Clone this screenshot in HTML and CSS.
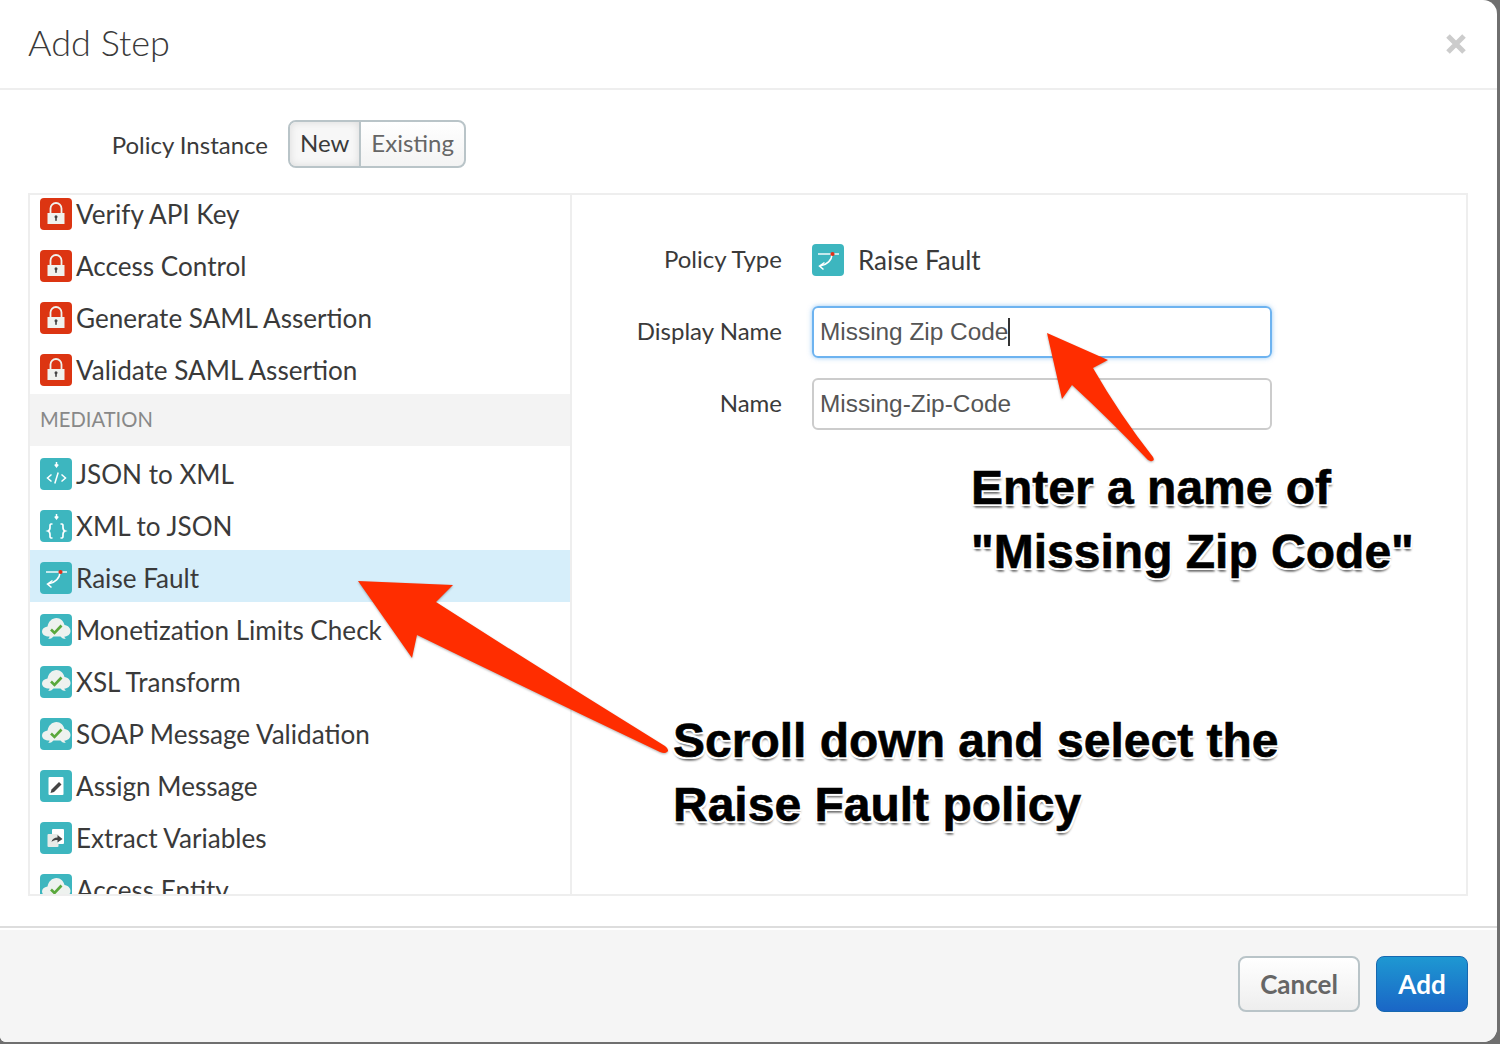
FILE: index.html
```html
<!DOCTYPE html>
<html lang="en">
<head>
  <meta charset="UTF-8" />
  <title>Add Step</title>
  <link rel="stylesheet" href="styles.css">
</head>
<body>
  <svg class="icon-defs" width="0" height="0">
    <defs>
      <symbol id="i-lock" viewBox="0 0 32 32">
        <rect width="32" height="32" rx="4" fill="#dc3512"/>
        <path d="M10.500 15v-4.500a5.500 5.500 0 0 1 11 0V15" fill="none" stroke="#f0f2ee" stroke-width="1.800"/>
        <rect x="7.500" y="15" width="17" height="11" fill="#f0f2ee"/>
        <circle cx="16" cy="18.700" r="1.500" fill="#444"/>
        <rect x="15.200" y="19" width="1.600" height="3.800" fill="#444"/>
      </symbol>
      <symbol id="i-json" viewBox="0 0 32 32">
        <rect width="32" height="32" rx="4" fill="#3db6bf"/>
        <path d="M16.500 4v4M14.800 6.500l1.700 2.200 1.700-2.200" fill="none" stroke="#fff" stroke-width="1.500"/>
        <path d="M11.500 16.500 7.500 20l4 3.500M21.500 16.500l4 3.500-4 3.500M18.200 14.500l-3.400 11" fill="none" stroke="#fff" stroke-width="1.500"/>
      </symbol>
      <symbol id="i-xml" viewBox="0 0 32 32">
        <rect width="32" height="32" rx="4" fill="#3db6bf"/>
        <path d="M16.500 4v4M14.800 6.500l1.700 2.200 1.700-2.200" fill="none" stroke="#fff" stroke-width="1.500"/>
        <path d="M12.500 14h-1.200c-1.500 0-1.300 1.500-1.300 3.500 0 2-.5 3-2 3.500 1.500.5 2 1.500 2 3.500s-.2 3.500 1.300 3.500h1.200M20.500 14h1.200c1.500 0 1.300 1.500 1.300 3.500 0 2 .5 3 2 3.500-1.500.5-2 1.500-2 3.500s.2 3.500-1.300 3.500h-1.200" fill="none" stroke="#fff" stroke-width="1.700"/>
      </symbol>
      <symbol id="i-fault" viewBox="0 0 32 32">
        <rect width="32" height="32" rx="4" fill="#3db6bf"/>
        <path d="M6 10h21" fill="none" stroke="#fff" stroke-width="1.400"/>
        <path d="M20 10c0 6-5 11-12 12M12.500 18.500 7.500 22l4 3.500" fill="none" stroke="#fff" stroke-width="1.500"/>
        <circle cx="20.500" cy="10" r="2.100" fill="#e0301a"/>
      </symbol>
      <symbol id="i-cloud" viewBox="0 0 32 32">
        <rect width="32" height="32" rx="4" fill="#3db6bf"/>
        <path d="M8 25c1-.8 1.500-1.500 1.500-2.500C5 22.500 2 20.500 2 17.500 2 15 4 13 7.500 12.500 8.500 7.500 12 4 16.500 4c4 0 7 3 8 7 3.500.5 6 3 6 6 0 3-2.500 5.500-6 5.500 0 1 .5 1.800 1.500 2.500-2 0-4.500-.8-5.500-2.500h-7c-1.500 1.700-3 2.500-5.500 2.500z" fill="#eef2ef"/>
        <path d="M11 15.500l3.500 3.500 7-7.500" fill="none" stroke="#5aa83c" stroke-width="2.600"/>
      </symbol>
      <symbol id="i-assign" viewBox="0 0 32 32">
        <rect width="32" height="32" rx="4" fill="#3db6bf"/>
        <rect x="8.500" y="7" width="15" height="18" rx="1" fill="#fff"/>
        <path d="M10.500 23l1-3.500 7.500-7.500 2.500 2.500-7.500 7.500z" fill="#444"/>
      </symbol>
      <symbol id="i-extract" viewBox="0 0 32 32">
        <rect width="32" height="32" rx="4" fill="#3db6bf"/>
        <rect x="12" y="7" width="12" height="15" rx="1" fill="#fff"/>
        <rect x="7.500" y="12" width="11" height="13" rx="1" fill="#e8ebe8"/>
        <path d="M11.500 20c.5-3 3-4.500 6-4.500V13l5 4-5 3.500V18c-2.500 0-4.500.5-6 2z" fill="#444"/>
      </symbol>
    </defs>
  </svg>

  <div class="modal">
    <header class="modal-head">
      <h1>Add Step</h1>
      <svg class="close" width="20" height="20" viewBox="0 0 20 20"><path d="M2 2l16 16M18 2 2 18" stroke="#ccc" stroke-width="5"/></svg>
    </header>

    <div class="modal-body">
      <div class="instance-row">
        <span class="instance-label">Policy Instance</span>
        <div class="toggle">
          <span class="toggle-item active">New</span>
          <span class="toggle-item">Existing</span>
        </div>
      </div>

      <div class="panel">
        <div class="policy-list">
          <div class="policy-scroll">
            <div class="policy"><svg class="policy-icon"><use href="#i-lock"/></svg>Verify API Key</div>
            <div class="policy"><svg class="policy-icon"><use href="#i-lock"/></svg>Access Control</div>
            <div class="policy"><svg class="policy-icon"><use href="#i-lock"/></svg>Generate SAML Assertion</div>
            <div class="policy"><svg class="policy-icon"><use href="#i-lock"/></svg>Validate SAML Assertion</div>
            <div class="group">MEDIATION</div>
            <div class="policy"><svg class="policy-icon"><use href="#i-json"/></svg>JSON to XML</div>
            <div class="policy"><svg class="policy-icon"><use href="#i-xml"/></svg>XML to JSON</div>
            <div class="policy selected"><svg class="policy-icon"><use href="#i-fault"/></svg>Raise Fault</div>
            <div class="policy"><svg class="policy-icon"><use href="#i-cloud"/></svg>Monetization Limits Check</div>
            <div class="policy"><svg class="policy-icon"><use href="#i-cloud"/></svg>XSL Transform</div>
            <div class="policy"><svg class="policy-icon"><use href="#i-cloud"/></svg>SOAP Message Validation</div>
            <div class="policy"><svg class="policy-icon"><use href="#i-assign"/></svg>Assign Message</div>
            <div class="policy"><svg class="policy-icon"><use href="#i-extract"/></svg>Extract Variables</div>
            <div class="policy"><svg class="policy-icon"><use href="#i-cloud"/></svg>Access Entity</div>
          </div>
        </div>

        <div class="details">
          <div class="field type-field">
            <span class="field-label">Policy Type</span>
            <svg class="policy-icon type-icon"><use href="#i-fault"/></svg>
            <span class="type-name">Raise Fault</span>
          </div>
          <div class="field">
            <span class="field-label">Display Name</span>
            <div class="input focused">Missing Zip Code<span class="caret"></span></div>
          </div>
          <div class="field">
            <span class="field-label">Name</span>
            <div class="input">Missing-Zip-Code</div>
          </div>
        </div>
      </div>
    </div>

    <footer class="modal-foot">
      <button class="btn">Cancel</button>
      <button class="btn primary">Add</button>
    </footer>
  </div>

  <!-- callouts drawn over the screenshot -->
  <svg class="arrows" width="1500" height="1044" viewBox="0 0 1500 1044">
    <path class="arrow" d="M358 581 453 585 436 602Q550 675 665 746Q670 750 667 752 665 754 660 752 540 695 417 635L412 658Z"/>
    <path class="arrow" d="M1047 333 1108 360 1093 368Q1120 415 1153 457 1155 461 1152 461 1149 462 1146 458 1110 420 1072 385L1062 399Z"/>
  </svg>
  <div class="note note-name">Enter a name of<br>"Missing Zip Code"</div>
  <div class="note note-fault">Scroll down and select the<br>Raise Fault policy</div>
</body>
</html>
```

FILE: styles.css
```css
* {
  box-sizing: border-box;
  font-family: 'Lato', sans-serif;
}

html, body {
  height: 100%;
}

body {
  margin: 0;
  overflow: hidden;
  background: #6f6f6f;
  padding: 0 3px 2px 0;
  position: relative;
}

.icon-defs {
  position: absolute;
}

.modal {
  height: 100%;
  background: white;
  border-radius: 0 14px 14px 6px;
  display: flex;
  flex-direction: column;
  overflow: hidden;
  color: #3a3a3a;
}

.modal-head {
  height: 90px;
  flex: none;
  border-bottom: 2px solid #eee;
  display: flex;
  justify-content: space-between;
  align-items: center;
  padding: 0 31px 1px 28px;
}

.modal-head h1 {
  margin: 0 0 3px;
  font-size: 36px;
  font-weight: 300;
  color: #3a3a3a;
}

.modal-body {
  flex: 1;
  display: flex;
  flex-direction: column;
  padding: 30px 29px 30px 28px;
  min-height: 0;
}

.instance-row {
  display: flex;
  align-items: center;
  height: 48px;
  flex: none;
}

.instance-label {
  width: 240px;
  text-align: right;
  font-size: 24px;
  margin-right: 20px;
}

.toggle {
  display: flex;
  height: 48px;
  border: 2px solid #b9c4c8;
  border-radius: 8px;
  overflow: hidden;
  background: linear-gradient(#fff, #f3f3f3);
  font-size: 24px;
}

.toggle-item {
  display: flex;
  align-items: center;
  padding: 0 10px 4px;
  color: #666;
}

.toggle-item.active {
  background: #f7f7f7;
  box-shadow: inset 0 0 8px rgba(0, 0, 0, 0.12);
  color: #3a3a3a;
  border-right: 2px solid #b9c4c8;
}

.panel {
  flex: 1;
  display: flex;
  margin-top: 25px;
  border: 2px solid #eee;
  min-height: 0;
}

.policy-list {
  width: 542px;
  flex: none;
  border-right: 2px solid #eee;
  overflow: hidden;
}

.policy-scroll {
  margin-top: -9px;
}

.policy {
  height: 52px;
  display: flex;
  align-items: flex-start;
  padding: 12px 0 0 10px;
  font-size: 26.1px;
  line-height: 32px;
  white-space: nowrap;
}

.policy.selected {
  background: #d6eefa;
}

.policy-icon {
  width: 32px;
  height: 32px;
  margin-right: 4px;
  flex: none;
}

.group {
  height: 52px;
  background: #f3f3f3;
  display: flex;
  align-items: center;
  padding: 0 0 2px 10px;
  font-size: 20.2px;
  color: #888;
}

.details {
  flex: 1;
  padding-top: 35px;
}

.field {
  display: flex;
  align-items: center;
  height: 52px;
  margin-bottom: 20px;
}

.type-field {
  height: 60px;
  margin-bottom: 16px;
}

.field-label {
  width: 210px;
  text-align: right;
  font-size: 24px;
  margin-right: 30px;
  padding-bottom: 4px;
}

.type-icon {
  margin-right: 14px;
}

.type-name {
  font-size: 26px;
}

.input {
  width: 460px;
  height: 52px;
  border: 2px solid #ccc;
  border-radius: 6px;
  display: flex;
  align-items: center;
  padding-left: 6px;
  font-family: 'Liberation Sans', sans-serif;
  font-size: 24.4px;
  color: #555;
}

.input.focused {
  border-color: #6db3f0;
  box-shadow: 0 0 5px rgba(109, 179, 240, 0.7);
}

.caret {
  width: 2px;
  height: 28px;
  background: #333;
  margin-left: 0;
}

.modal-foot {
  height: 116px;
  flex: none;
  background: #f5f5f5;
  border-top: 2px solid #ddd;
  box-shadow: inset 0 2px 0 white;
  display: flex;
  justify-content: flex-end;
  align-items: flex-start;
  gap: 16px;
  padding: 28px 29px 0 0;
}

.btn {
  height: 56px;
  border-radius: 8px;
  font-size: 26px;
  font-weight: 700;
  border: 2px solid #b9c4c8;
  background: linear-gradient(#fff, #eee);
  color: #666;
  width: 122px;
}

.btn.primary {
  width: 92px;
  border: 1px solid #1668b0;
  background: linear-gradient(#1e98d2, #1a66c6);
  color: white;
}

.arrows {
  position: absolute;
  top: 0;
  left: 0;
}

.arrow {
  fill: #ff2d00;
  filter: drop-shadow(0 1px 1px rgba(0, 0, 0, 0.3));
}

.note {
  position: absolute;
  font-family: 'Liberation Sans', sans-serif;
  font-weight: 700;
  font-size: 48px;
  line-height: 64px;
  color: black;
  white-space: nowrap;
  -webkit-text-stroke: 0.6px black;
  text-shadow: 2px 0 0 white, -2px 0 0 white, 0 2px 0 white, 0 -2px 0 white,
    2px 2px 0 white, -2px 2px 0 white, 2px -2px 0 white, -2px -2px 0 white,
    1px 4px 2px rgba(0, 0, 0, 0.4), -1px 3px 2px rgba(0, 0, 0, 0.3);
}

.note-name {
  left: 971px;
  top: 456px;
}

.note-fault {
  left: 673px;
  top: 709px;
}
```
